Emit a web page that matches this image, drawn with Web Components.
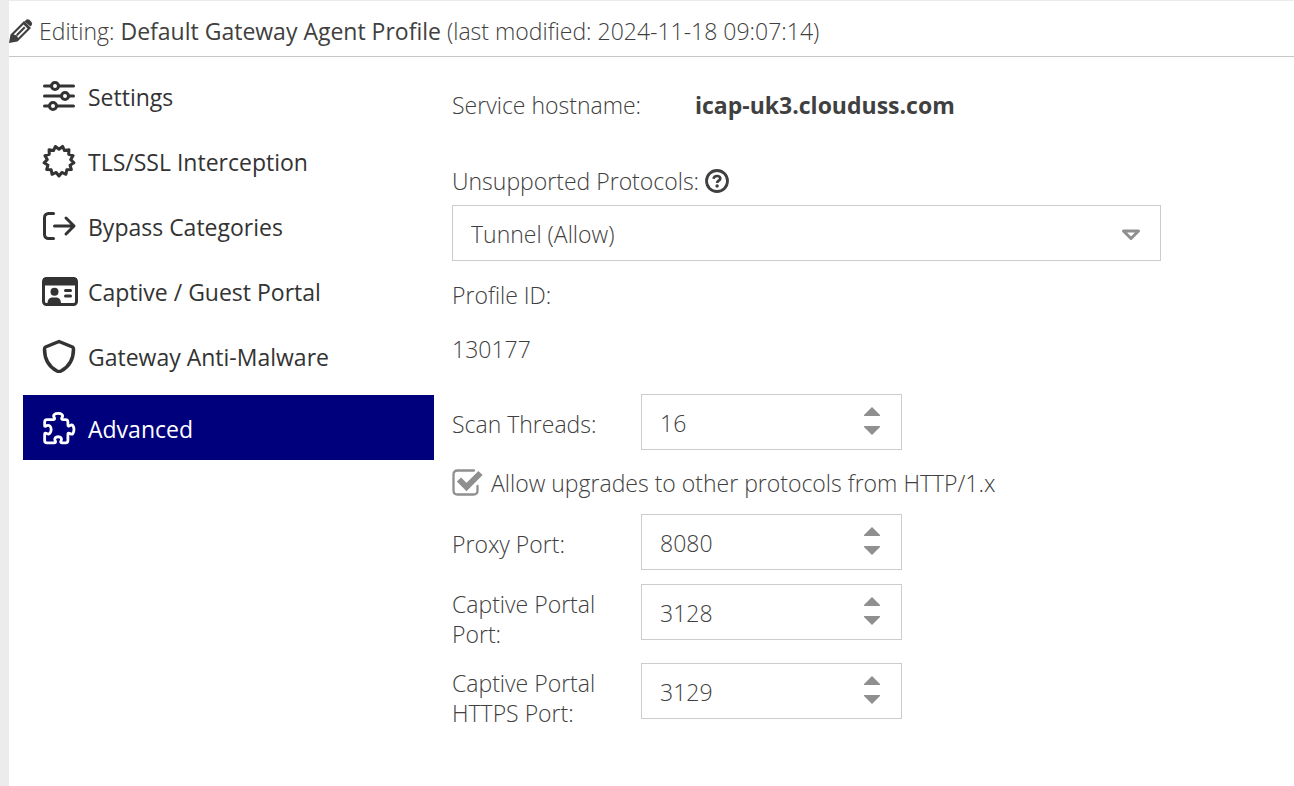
<!DOCTYPE html>
<html lang="en">
<head>
<meta charset="utf-8">
<title>Default Gateway Agent Profile</title>
<style>
  body { margin: 0; background: #fff; font: 300 23px/30px "Open Sans", "Noto Sans", sans-serif; color: #404040; }
</style>
</head>
<body>
<profile-editor>
  <editor-header slot="header" state="Editing:" modified="(last modified: 2024-11-18 09:07:14)">Default Gateway Agent Profile</editor-header>
  <nav-item slot="nav" icon="sliders">Settings</nav-item>
  <nav-item slot="nav" icon="seal">TLS/SSL Interception</nav-item>
  <nav-item slot="nav" icon="exit">Bypass Categories</nav-item>
  <nav-item slot="nav" icon="card">Captive / Guest Portal</nav-item>
  <nav-item slot="nav" icon="shield">Gateway Anti-Malware</nav-item>
  <nav-item slot="nav" icon="puzzle" active>Advanced</nav-item>
  <advanced-form></advanced-form>
</profile-editor>

<script>
const icons = {
  sliders: `<path d="M5.500 7h29M5.500 17h29M5.500 27h29"/><circle cx="16" cy="7" r="3.500" fill="#fff"/><circle cx="26" cy="17" r="3.500" fill="#fff"/><circle cx="14" cy="27" r="3.500" fill="#fff"/>`,
  exit: `<path d="M14.500 4.500H9.500a4 4 0 0 0-4 4v17a4 4 0 0 0 4 4h5M15.500 17h19M27 9l8 8-8 8"/>`,
  card: `<rect x="4.500" y="4.500" width="33" height="26" rx="3"/><path d="M4 4h34v7.500H4z" fill="currentColor" stroke="none"/><circle cx="15.500" cy="17.700" r="4" fill="currentColor" stroke="none"/><path d="M8.500 29.500c0-4 2-6 5-6h3.500c3 0 5 2 5 6z" fill="currentColor" stroke="none"/><path d="M26.500 16.500h5M26.500 22h5"/>`,
  shield: `<path d="M20 2.500L33.500 8q1 .5 1 2c0 10-4 17.500-12.500 22q-2 1-4 0C9.500 27.500 5.500 20 5.500 10q0-1.500 1-2z" stroke-width="3.500"/>`,
  puzzle: `<path transform="translate(1 1) scale(.93 .95)" d="M5 14.500v-4q0-2.500 2.500-2.500h7c1.500 0 1.500-1 .8-2.200C13.500 3 16 1.500 19.500 1.500S25.500 3 23.700 5.800C23 7 23 8 24.500 8h3q2.500 0 2.500 2.500v3c0 1.500 1 1.700 2.200.9C35 12.500 36.500 15 36.500 18.500S35 24.500 32.200 22.700C31 22 30 22 30 23.500V30q0 2.500-2.500 2.500h-4c-1.500 0-1.500-1-.8-2.200 1.300-2.800-.7-4.300-3.200-4.300s-4.500 1.500-3.200 4.300c.7 1.200.7 2.200-.8 2.200h-8Q5 32.500 5 30v-6.500C5 22 6 22 7.200 22.700c2.800 1.300 4.800-1 4.800-4.200s-2-5.300-4.800-4.100C6 15.200 5 15.500 5 14.500"/>`
};
/* The seal outline alternates between an outer and an inner radius. */
const points = 13;
let seal = "";
for (let i = 0; i < points * 2; i++) {
  const angle = (i + 1) * Math.PI / points - Math.PI / 2;
  const r = i % 2 ? 11.8 : 15;
  seal += (i ? "L" : "M") + (20 + r * Math.cos(angle)).toFixed(2) + " " + (17 + r * Math.sin(angle)).toFixed(2);
}
icons.seal = `<path d="${seal}z"/>`;

class BaseElement extends HTMLElement {
  render(html) { this.attachShadow({ mode: "open" }).innerHTML = html; }
}

customElements.define("profile-editor", class extends BaseElement {
  connectedCallback() {
    this.render(`<style>
      :host { display: block; box-sizing: border-box; min-height: 100vh; border-left: 9px solid #ececec; border-top: 1px solid #ebebeb; }
      .body { display: grid; grid-template-columns: 411px minmax(0, 1fr); column-gap: 18px; padding-left: 14px; }
      nav { padding-top: 6px; }
    </style>
    <slot name="header"></slot>
    <div class="body"><nav aria-label="Profile sections"><slot name="nav"></slot></nav><main><slot></slot></main></div>`);
  }
});

customElements.define("editor-header", class extends BaseElement {
  connectedCallback() {
    this.render(`<style>
      :host { display: block; border-bottom: 1px solid #c6c6c6; }
      header { display: flex; align-items: center; height: 55px; gap: 6px; }
      h1 { margin: 0; font-size: 23px; line-height: 30px; font-weight: 300; padding-top: 5px; }
      strong { font-weight: 400; }
      svg { flex: none; padding-top: 5px; }
    </style>
    <header><svg width="24" height="24" viewBox="0 0 24 24" fill="currentColor" aria-hidden="true"><path d="M0 24l1.500-8.500L15 2l7 7L8.500 22.500zM16.500 1.500c1-1 2-1.500 3-1 1.500.5 3 2 3.500 3.500.4 1 0 2-1 3l-.5.500-6-5z"/><path d="M14.500 5.500l-10 10L8 16.500 9 19 18.500 9.500z" fill="#fff"/><path d="M15 7.500L7 15.500l1.500 1.500L16.500 9z"/></svg>
    <h1>${this.getAttribute("state")} <strong><slot></slot></strong> ${this.getAttribute("modified")}</h1></header>`);
  }
});

customElements.define("nav-item", class extends BaseElement {
  connectedCallback() {
    this.render(`<style>
      :host { display: block; color: #333; font-weight: 400; }
      :host([active]) { margin-top: 7px; background: #00007d; color: #fff; }
      a { display: flex; align-items: center; gap: 9px; height: 65px; padding-left: 16px; color: inherit; text-decoration: none; }
      svg { flex: none; fill: none; stroke: currentColor; stroke-width: 3; stroke-linecap: round; stroke-linejoin: round; }
      span { padding-top: 2px; }
    </style>
    <a href="#"${this.hasAttribute("active") ? ' aria-current="page"' : ""}><svg width="40" height="34" viewBox="0 0 40 34" aria-hidden="true">${icons[this.getAttribute("icon")]}</svg><span><slot></slot></span></a>`);
  }
});

customElements.define("number-field", class extends BaseElement {
  connectedCallback() {
    this.render(`<style>
      :host { display: grid; grid-template-columns: 189px 261px; align-items: start; }
      label { padding: 15px 30px 0 0; }
      :host([tall]) label { padding-top: 5px; }
      .box { display: flex; align-items: center; box-sizing: border-box; height: 56px; border: 1px solid #ccc; padding: 0 16px 0 18px; }
      input { flex: 1; min-width: 0; height: 30px; padding: 2px 0 0; border: 0; background: none; font: inherit; color: inherit; outline: none; appearance: textfield; }
      input::-webkit-inner-spin-button { appearance: none; margin: 0; }
      .spin { display: grid; gap: 2px; padding-bottom: 2px; }
      button { display: grid; place-items: center; width: 26px; height: 17px; padding: 0; border: 0; background: none; }
      svg { fill: #8f8f8f; }
    </style>
    <label for="value"><slot></slot></label>
    <div class="box"><input id="value" type="number" value="${this.getAttribute("value")}">
      <div class="spin">
        <button type="button" aria-label="Increase"><svg width="18" height="9" viewBox="0 0 18 9"><path d="M9 0l8 8q.500 1-.500 1h-15q-1 0-.500-1z"/></svg></button>
        <button type="button" aria-label="Decrease"><svg width="18" height="9" viewBox="0 0 18 9"><path d="M9 9l8-8q.500-1-.500-1h-15q-1 0-.500 1z"/></svg></button>
      </div></div>`);
    const input = this.shadowRoot.querySelector("input");
    const [up, down] = this.shadowRoot.querySelectorAll("button");
    up.onclick = () => input.stepUp();
    down.onclick = () => input.stepDown();
  }
});

customElements.define("check-field", class extends BaseElement {
  connectedCallback() {
    this.render(`<style>
      :host { display: block; }
      label { display: flex; align-items: center; gap: 8px; }
      .mark { display: grid; width: 31px; height: 28px; }
      .mark > * { grid-area: 1 / 1; }
      input { appearance: none; margin: 0; }
      svg { pointer-events: none; }
      input:not(:checked) + svg .tick { display: none; }
    </style>
    <label><span class="mark"><input type="checkbox" checked><svg width="31" height="28" viewBox="0 0 31 28" fill="none" stroke="#8f8f8f" aria-hidden="true"><path d="M22 1.500H5.500q-4 0-4 4v16q0 4 4 4h16q4 0 4-4V17" stroke-width="2.300" stroke-linecap="round"/><path class="tick" d="M7 10.500l7.500 7.500L28.500 4" stroke-width="6"/></svg></span><span><slot></slot></span></label>`);
  }
});

customElements.define("advanced-form", class extends BaseElement {
  connectedCallback() {
    this.render(`<style>
      :host { display: block; padding-top: 33px; }
      form { max-width: 709px; margin-right: 20px; }
      dl, dt, dd { margin: 0; }
      .host { display: grid; grid-template-columns: 243px 1fr; }
      .host dd { font-weight: 700; }
      .protocols { margin: 46px 0 9px; display: flex; align-items: center; gap: 6px; }
      .help { display: grid; padding: 0; border: 0; background: none; color: inherit; }
      .select { display: grid; align-items: center; }
      .select > * { grid-area: 1 / 1; }
      select { appearance: none; width: 100%; height: 56px; padding: 2px 60px 0 18px; border: 1px solid #ccc; border-radius: 0; background: #fff; font: inherit; color: inherit; }
      .select svg { justify-self: end; margin: 3px 20px 0 0; pointer-events: none; }
      .profile { margin: 19px 0 30px; }
      .profile dd { margin-top: 24px; }
      check-field { margin: 18px 0 16px; }
      .ports { display: grid; gap: 14px; }
    </style>
    <form>
      <dl class="host"><dt>Service hostname:</dt><dd>icap-uk3.clouduss.com</dd></dl>
      <div class="protocols"><label for="protocols">Unsupported Protocols:</label>
        <button class="help" type="button" aria-label="Help"><svg width="24" height="24" viewBox="0 0 24 24" fill="none" stroke="currentColor" aria-hidden="true"><circle cx="12" cy="12" r="10.500" stroke-width="2.800"/><path d="M8.500 9.700Q9 7 12 7t3.300 2.500q0 1.300-1.800 2.300-1.300.7-1.300 2.200" stroke-width="2.700"/><circle cx="12.100" cy="17" r="1.700" fill="currentColor" stroke="none"/></svg></button></div>
      <div class="select"><select id="protocols"><option>Tunnel (Allow)</option></select><svg width="20" height="13" viewBox="0 0 20 13" fill="none" stroke="#8f8f8f" stroke-width="3" stroke-linejoin="round" aria-hidden="true"><path d="M2.500 3h15L10 10.500z"/></svg></div>
      <dl class="profile"><dt>Profile ID:</dt><dd>130177</dd></dl>
      <number-field value="16">Scan Threads:</number-field>
      <check-field>Allow upgrades to other protocols from HTTP/1.x</check-field>
      <div class="ports">
        <number-field value="8080">Proxy Port:</number-field>
        <number-field value="3128" tall>Captive Portal Port:</number-field>
        <number-field value="3129" tall>Captive Portal HTTPS Port:</number-field>
      </div>
    </form>`);
  }
});
</script>
</body>
</html>
